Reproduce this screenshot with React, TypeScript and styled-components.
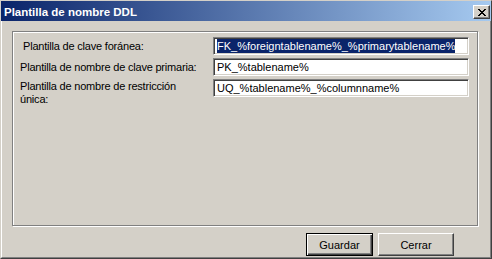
import styled, { createGlobalStyle } from 'styled-components'

const GlobalStyle = createGlobalStyle`
    body {
        margin: 0;
        background: #d4d0c8;
    }
`

const Window = styled.div`
    width: 492px;
    height: 259px;
    box-sizing: border-box;
    display: flex;
    flex-direction: column;
    background: #d4d0c8;
    border-style: solid;
    border-width: 1px;
    border-color: #d4d0c8 #404040 #404040 #d4d0c8;
    font-family: "Liberation Sans", Arial, sans-serif;
    font-size: 11px;
    color: #000;
`

const TitleBar = styled.div`
    height: 20px;
    flex: none;
    display: flex;
    align-items: center;
    justify-content: space-between;
    padding: 0 1px 0 3px;
    background: linear-gradient(to right, #0a246a, #a6caf0);
`

const Title = styled.span`
    color: #fff;
    font-weight: bold;
    font-size: 11.5px;
    margin-top: 2px;
`

const CloseButton = styled.button`
    width: 17px;
    height: 14px;
    margin-top: 2px;
    padding: 0;
    display: flex;
    align-items: center;
    justify-content: center;
    background: #d4d0c8;
    border: 1px solid;
    border-color: #fff #404040 #404040 #fff;
    box-shadow: inset -1px -1px 0 #808080;
`

const Body = styled.div`
    flex: 1;
    display: flex;
    flex-direction: column;
    padding: 10px 12px 1px 10px;
    border-left: 1px solid #fff;
    border-right: 1px solid #808080;
    border-bottom: 1px solid #808080;
`

const GroupBox = styled.div`
    flex: 1;
    display: grid;
    grid-template-columns: 1fr 256px;
    grid-template-rows: 18px 18px auto;
    row-gap: 3px;
    align-content: start;
    padding: 5px 8px 0 7px;
    border: 1px solid #808080;
    box-shadow: 1px 1px 0 #fff, inset 1px 1px 0 #fff;
`

const Label = styled.label<{ $indent?: number; $top?: boolean }>`
    align-self: ${p => (p.$top ? 'start' : 'center')};
    margin-top: ${p => (p.$top ? '1px' : '0')};
    padding-left: ${p => p.$indent ?? 0}px;
    line-height: 13px;
    letter-spacing: -0.2px;
    white-space: nowrap;
`

const Field = styled.div`
    box-sizing: border-box;
    height: 18px;
    width: 256px;
    display: flex;
    align-items: center;
    padding: 0 3px;
    background: #fff;
    border: 1px solid;
    border-color: #808080 #fff #fff #808080;
    box-shadow: inset 1px 1px 0 #404040, inset -1px -1px 0 #d4d0c8;
    line-height: 13px;
    white-space: nowrap;
    overflow: hidden;
`

const Selected = styled.span`
    background: #0a246a;
    color: #fff;
    line-height: 14px;
`

const ButtonRow = styled.div`
    flex: none;
    display: flex;
    justify-content: flex-end;
    gap: 5px;
    margin-top: 7px;
    padding-right: 24px;
`

const Button = styled.button<{ $width: number; $default?: boolean }>`
    width: ${p => p.$width}px;
    height: 23px;
    padding: 0;
    font-family: "Liberation Sans", Arial, sans-serif;
    font-size: 11px;
    color: #000;
    background: #d4d0c8;
    border: 1px solid;
    border-color: ${p => (p.$default ? '#000' : '#fff #404040 #404040 #fff')};
    box-shadow: ${p =>
        p.$default
            ? 'inset 1px 1px 0 #fff, inset -1px -1px 0 #404040, inset -2px -2px 0 #808080'
            : 'inset -1px -1px 0 #808080'};
`

// classic 8x7 pixel close glyph
const xPixels = [
    [0, 1, 6, 7],
    [1, 2, 5, 6],
    [2, 3, 4, 5],
    [3, 4],
    [2, 3, 4, 5],
    [1, 2, 5, 6],
    [0, 1, 6, 7],
]

function CloseGlyph() {
    return (
        <svg width="8" height="7" viewBox="0 0 8 7" shapeRendering="crispEdges">
            {xPixels.map((row, y) =>
                row.map(x => <rect key={`${x}-${y}`} x={x} y={y} width="1" height="1" fill="#000" />)
            )}
        </svg>
    )
}

function App() {
    return (
        <>
            <GlobalStyle />
            <Window>
                <TitleBar>
                    <Title>Plantilla de nombre DDL</Title>
                    <CloseButton aria-label="Cerrar">
                        <CloseGlyph />
                    </CloseButton>
                </TitleBar>
                <Body>
                    <GroupBox>
                        <Label $indent={3}>Plantilla de clave foránea:</Label>
                        <Field>
                            <Selected>FK_%foreigntablename%_%primarytablename%</Selected>
                        </Field>
                        <Label>Plantilla de nombre de clave primaria:</Label>
                        <Field>PK_%tablename%</Field>
                        <Label $top>
                            Plantilla de nombre de restricción
                            <br />
                            única:
                        </Label>
                        <Field>UQ_%tablename%_%columnname%</Field>
                    </GroupBox>
                    <ButtonRow>
                        <Button $width={67} $default>Guardar</Button>
                        <Button $width={76}>Cerrar</Button>
                    </ButtonRow>
                </Body>
            </Window>
        </>
    )
}

export default App
